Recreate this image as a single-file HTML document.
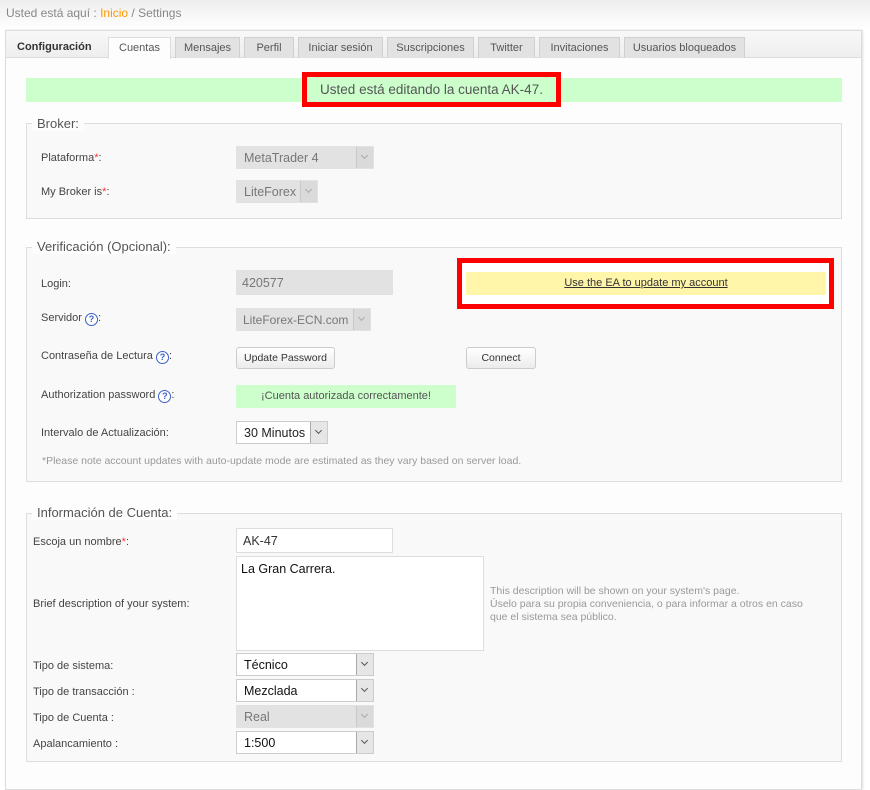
<!DOCTYPE html>
<html><head><meta charset="utf-8"><style>
*{box-sizing:border-box;margin:0;padding:0}
body{width:870px;height:776px;overflow:hidden;background:#fff;font-family:"Liberation Sans",Tahoma,sans-serif;font-size:11px;color:#444;position:relative}
.a{position:absolute}
.top{left:0;top:0;width:870px;height:30px;background:linear-gradient(#eee,#fff)}
.crumb{left:6px;top:6px;font-size:12px;color:#888}
.panel{left:5px;top:30px;width:857px;height:760px;border:1px solid #ddd;background:#fdfdfd;box-shadow:1px 0 2px #ddd}
.strip{left:6px;top:31px;width:855px;height:27px;background:linear-gradient(#f8f8f8,#eee);border-bottom:1px solid #ddd}
.tab{top:37px;height:21px;background:#e2e2e2;border:1px solid #d0d0d0;border-bottom:none;text-align:center;line-height:21px;font-size:11px;color:#555}
.fs{border:1px solid #ddd;background:#f9f9f9;left:26px;width:816px}
.lg{font-size:13px;color:#555;background:#fdfdfd;padding:0 5px;left:32px}
.lab{color:#444}
.r{color:#f33}
.sel{height:23px;border:1px solid #ccc;background:#fff;font-size:12.5px;color:#222;line-height:22px;padding-left:7px;overflow:hidden}
.sel.d{background:#e2e2e2;border-color:#e2e2e2;color:#777}
.sel .ar{position:absolute;right:-1px;top:-1px;width:18px;height:23px;border:1px solid #aaa;background:#e6e6e6}
.sel.d .ar{border-color:#c8c8c8;background:#dadada}
.sel .ar:after{content:"";position:absolute;left:5px;top:6px;width:4px;height:4px;border-right:1px solid #555;border-bottom:1px solid #555;transform:rotate(45deg)}
.sel.d .ar:after{border-color:#aaa}
.btn{height:22px;border:1px solid #ccc;border-radius:3px;background:linear-gradient(#fff,#ececec);text-align:center;line-height:21px;font-size:10.5px;color:#333}
.q{display:inline-block;width:13px;height:13px;border:1.5px solid #3a5fc8;border-radius:50%;color:#3a5fc8;font-size:9px;font-weight:bold;line-height:10px;text-align:center;vertical-align:-1px;background:#fff}
.inp{border:1px solid #ddd;background:#fff;font-size:12.5px;color:#333;padding-left:6px}
</style></head><body>
<div class="a top"></div>
<div class="a crumb">Usted está aquí : <span style="color:#f90">Inicio</span> / Settings</div>
<div class="a panel"></div>
<div class="a strip"></div>
<div class="a" style="left:17px;top:41px;font-weight:bold;font-size:11px;color:#333">Configuración</div>
<div class="a tab" style="left:108px;width:63px;background:#fdfdfd;border-color:#ddd;height:22px">Cuentas</div>
<div class="a tab" style="left:175px;width:65px">Mensajes</div>
<div class="a tab" style="left:244px;width:50px">Perfil</div>
<div class="a tab" style="left:298px;width:85px">Iniciar sesión</div>
<div class="a tab" style="left:387px;width:87px">Suscripciones</div>
<div class="a tab" style="left:478px;width:57px">Twitter</div>
<div class="a tab" style="left:539px;width:81px">Invitaciones</div>
<div class="a tab" style="left:624px;width:121px">Usuarios bloqueados</div>

<div class="a" style="left:26px;top:78px;width:816px;height:24px;background:#ccffcc"></div>
<div class="a" style="left:302px;top:72px;width:259px;height:35px;border:5px solid #f00;text-align:center;line-height:25px;font-size:13.5px;color:#555;background:#ccffcc">Usted está editando la cuenta AK-47.</div>

<div class="a fs" style="top:123px;height:96px"></div>
<div class="a lg" style="top:116px">Broker:</div>
<div class="a lab" style="left:41px;top:152px">Plataforma<span class="r">*</span>:</div>
<div class="a sel d" style="left:236px;top:146px;width:138px">MetaTrader 4<div class="ar"></div></div>
<div class="a lab" style="left:41px;top:186px">My Broker is<span class="r">*</span>:</div>
<div class="a sel d" style="left:236px;top:180px;width:82px">LiteForex<div class="ar"></div></div>

<div class="a fs" style="top:247px;height:235px"></div>
<div class="a lg" style="top:239px">Verificación (Opcional):</div>
<div class="a lab" style="left:41px;top:278px">Login:</div>
<div class="a sel d" style="left:236px;top:270px;width:157px;height:25px;line-height:24px;padding-left:5px">420577</div>
<div class="a lab" style="left:41px;top:312px">Servidor <span class="q">?</span>:</div>
<div class="a sel d" style="left:236px;top:308px;width:135px;font-size:12px;padding-left:6px">LiteForex-ECN.com<div class="ar"></div></div>
<div class="a lab" style="left:41px;top:350px">Contraseña de Lectura <span class="q">?</span>:</div>
<div class="a btn" style="left:236px;top:347px;width:99px">Update Password</div>
<div class="a btn" style="left:466px;top:347px;width:70px">Connect</div>
<div class="a lab" style="left:41px;top:389px">Authorization password <span class="q">?</span>:</div>
<div class="a" style="left:236px;top:385px;width:220px;height:23px;background:#ccffcc;text-align:center;line-height:23px;color:#555">¡Cuenta autorizada correctamente!</div>
<div class="a lab" style="left:41px;top:427px">Intervalo de Actualización:</div>
<div class="a sel" style="left:236px;top:421px;width:92px">30 Minutos<div class="ar"></div></div>
<div class="a" style="left:42px;top:455px;color:#999;font-size:10.5px">*Please note account updates with auto-update mode are estimated as they vary based on server load.</div>
<div class="a" style="left:457px;top:258px;width:377px;height:51px;border:5px solid #f00;background:#fff"></div>
<div class="a" style="left:466px;top:272px;width:360px;height:23px;background:#fff6aa;text-align:center;line-height:23px;color:#333;text-decoration:underline">Use the EA to update my account</div>

<div class="a fs" style="top:513px;height:249px"></div>
<div class="a lg" style="top:505px">Información de Cuenta:</div>
<div class="a lab" style="left:33px;top:536px">Escoja un nombre<span class="r">*</span>:</div>
<div class="a inp" style="left:236px;top:528px;width:157px;height:25px;line-height:24px">AK-47</div>
<div class="a lab" style="left:33px;top:598px">Brief description of your system:</div>
<div class="a inp" style="left:236px;top:556px;width:248px;height:95px;padding:5px 4px;color:#111">La Gran Carrera.</div>
<div class="a" style="left:490px;top:585px;color:#999;line-height:13px;font-size:10.5px">This description will be shown on your system's page.<br>Úselo para su propia conveniencia, o para informar a otros en caso<br>que el sistema sea público.</div>
<div class="a lab" style="left:33px;top:660px">Tipo de sistema:</div>
<div class="a sel" style="left:236px;top:653px;width:138px;color:#111">Técnico<div class="ar"></div></div>
<div class="a lab" style="left:33px;top:686px">Tipo de transacción :</div>
<div class="a sel" style="left:236px;top:679px;width:138px;color:#111">Mezclada<div class="ar"></div></div>
<div class="a lab" style="left:33px;top:712px">Tipo de Cuenta :</div>
<div class="a sel d" style="left:236px;top:705px;width:138px">Real<div class="ar"></div></div>
<div class="a lab" style="left:33px;top:738px">Apalancamiento :</div>
<div class="a sel" style="left:236px;top:731px;width:138px;color:#111">1:500<div class="ar"></div></div>
</body></html>
